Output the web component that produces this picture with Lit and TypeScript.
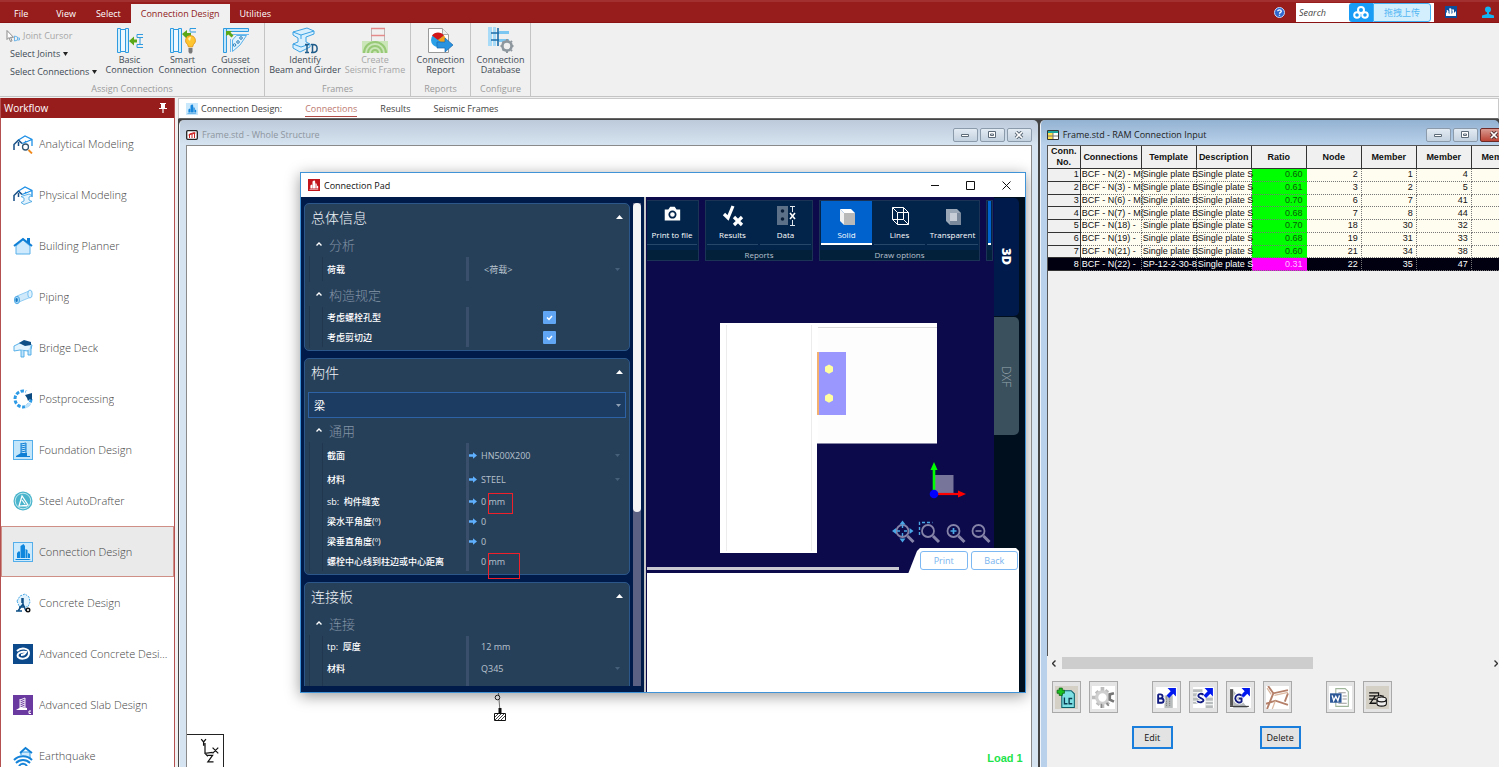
import { LitElement, html, svg, css, nothing } from "lit";
import { customElement, state } from "lit/decorators.js";
import { classMap } from "lit/directives/class-map.js";

const base = css`
  * { box-sizing: border-box; }
  :host { font-family: "Open Sans", "Noto Sans", "Noto Sans CJK SC", sans-serif; font-size: 9px; color: #444; }
  button { font: inherit; color: inherit; background: none; border: 0; padding: 0; margin: 0; }
  input, select { font: inherit; color: inherit; }
  svg { display: block; flex: none; }
`;

/* ---------- icons ---------- */

const towers = (c: string) => svg`
  <path fill=${c} d="M4 16V11l2-2 1 1v6zM7.500 16V4l3-2 1.500 2v12zM12.500 16V7l2 1v8zM15 16v-5l2 1v4z"/><path fill=${c} d="M2 17h16l-2 1H3z"/>`;

const houseFrame = svg`
  <path fill="none" stroke="#174f86" stroke-width="1.500" d="M1 16v-5.500L5.500 6 9 9.500M5.500 8v4"/>
  <path fill="none" stroke="#1e90e6" stroke-width="1.300" d="M5.500 6L12 2l7 3.500V12M9 9.500l4-1.500 6-2.500M13 8l-1-1"/>`;

const flowIcons: Record<string, unknown> = {
  analytical: svg`${houseFrame}<circle cx="12.500" cy="13" r="3" fill="#fff" stroke="#33556f" stroke-width="1.300"/><path stroke="#f08a1c" stroke-width="1.800" d="M15.500 16l3.500 3.500"/>`,
  physical: svg`${houseFrame}<path fill="#e3f3fd" stroke="#3aa0e0" stroke-width=".8" d="M8 11.500l8-2.500 3 1.500-3 1.500v3l3 1.500-8 3-3-2 3-1.500v-3z"/>`,
  house: svg`<path fill="#cfeafc" stroke="#58b0ea" d="M3 10l7-6 7 6v8H3z"/><path fill="none" stroke="#0f7fd6" stroke-width="2" d="M1 10l9-7 9 7"/><path fill="#0f7fd6" d="M14 2h3v6l-3-2z"/>`,
  pipe: svg`<path fill="#cfe9fb" stroke="#7cc3f0" stroke-width=".8" d="M4 9l12-5 2 6L6 15z"/><ellipse cx="4" cy="13" rx="2.600" ry="3.800" fill="#9dd4f7" stroke="#3b9fe2" stroke-width=".8"/><ellipse cx="3.600" cy="13" rx="1.200" ry="2" fill="#1878c0"/><ellipse cx="17" cy="7" rx="2.200" ry="4" fill="#dff2fd" stroke="#62b5ec" stroke-width=".8"/>`,
  bridge: svg`<path fill="#e4f4fe" stroke="#4aa9e6" stroke-width=".9" d="M1 8l6-3 12 2-1 4-3 2-8-1-6 1z"/><path fill="#0f4f86" d="M6 5l5-3 7 2v3l-6 1z"/><path fill="#bfe3fa" stroke="#4aa9e6" stroke-width=".9" d="M8 12v7h3v-6M15 12v5h3V8"/>`,
  post: svg`<g fill="none" stroke-width="3"><circle cx="10" cy="10" r="8" stroke="#2d9ae6" stroke-dasharray="3.400 1.600"/><path stroke="#fff" stroke-width="4" d="M13 2.500A8 8 0 0118 9.500"/></g><path fill="#0c4b82" d="M12 6l7-2v7l-2-1-2 2-1-3z"/><path stroke="#bfe3fa" stroke-width="3" fill="none" d="M17 14a8 8 0 01-5 4"/>`,
  foundation: svg`<rect x=".5" y=".5" width="19" height="19" fill="#c4e6fb" stroke="#54aeea"/><path stroke="#0f7fd6" fill="none" d="M8 4l5-1M8 6l5-1M8 8l5-1M8 10l5-1M8 12l5-1M8 3v11M13 3v11"/><path fill="#0f7fd6" d="M3 16l5-3h6v3h3v1H3z"/>`,
  drafter: svg`<circle cx="10" cy="10" r="9.500" fill="#49b4cb"/><circle cx="10" cy="10" r="7.800" fill="none" stroke="#bfe8f0"/><path fill="none" stroke="#fff" stroke-width="1.200" d="M6 15L9 5l6 9zM9 9l3 4M6 15h8"/>`,
  connection: svg`<rect x=".5" y=".5" width="19" height="19" fill="#cdeafc" stroke="#54aeea"/>${towers("#0f86de")}`,
  concrete: svg`<path fill="#e2f3fd" stroke="#4aa9e6" stroke-dasharray="2 1" d="M4 8l3-5 5-2 4 3 1 5-2 5-9-1z"/><path fill="none" stroke="#0d4f86" stroke-width="1.500" d="M10 5v6L5 18M10 11l3 7M9 5v5M6 14h6M3 18h6"/><circle cx="15" cy="17" r="1.800" fill="none" stroke="#111" stroke-width="1.400"/>`,
  advConcrete: svg`<rect width="20" height="20" fill="#0d4a8c"/><path fill="none" stroke="#fff" stroke-width="2" d="M4 7c4-4 12-3 12 2 0 6-8 7-11 4-2-4 4-6 8-5-1 2-3 3-5 3"/>`,
  slab: svg`<rect width="20" height="20" fill="#6b3aa0"/><path stroke="#fff" fill="none" stroke-width=".9" d="M7 5l5-2M7 7l5-2M7 9l5-2M7 11l5-2M7 13l5-2M7 4v9M12 3v10"/><path fill="#fff" d="M3 15l5-3 6 1v2z"/><path fill="none" stroke="#fff" d="M18 16h-2v2.500h2"/>`,
  quake: svg`<path fill="#cfeafc" stroke="#2d9ae6" d="M8 9V6h9v7"/><path fill="none" stroke="#0f7fd6" stroke-width="1.800" d="M7 7l5.500-5L19 7"/><g fill="none" stroke="#1583d8" stroke-width="2"><path d="M1 14c5-5 13-5 18 0M3 17c4-4 10-4 14 0M6 20c2-3 6-3 8 0"/></g>`,
};

const column = svg`<path fill="#d6effd" stroke="#2e9be0" d="M1.500 1.500h3v24h-3zM9.500 1.500h3v24h-3z"/><path fill="#eef8fe" stroke="#2e9be0" d="M4.500 2.500h5v22h-5z"/>`;

const ribbonIcons: Record<string, unknown> = {
  basic: svg`${column}<path fill="#5aa81a" d="M13 14l5-4.500v3h3v3h-3v3z"/><path fill="none" stroke="#2e9be0" d="M27 7.500h-6v3h3v7h-3v3h6M27 10.500h-3M27 17.500h-3"/>`,
  smart: svg`${column}<path fill="none" stroke="#2e9be0" d="M27 1.500h-6v3M21 5h6"/><path fill="#5aa81a" d="M13 7l5-4v3h4v3h-4v3z"/><path fill="#ffc531" stroke="#d98a10" stroke-width=".7" d="M21.500 8.500a5 5 0 00-3 9l1 2.500h4l1-2.500a5 5 0 00-3-9z"/><path fill="#777" d="M19.500 21h4v4l-1 1.500h-2l-1-1.500z"/><path fill="#fff3b0" d="M19 12a3 3 0 013-2l-1 4z"/>`,
  gusset: svg`<path fill="#bfe5fb" stroke="#2e9be0" d="M1.500 1.500h3v24h-3zM4.500 1.500h22v3h-22z"/><path fill="none" stroke="#6fbdf0" d="M8.500 25V12M10 7.500h17"/><path fill="#dff2fd" stroke="#5ab1ea" d="M10.500 24.500V13l4-4.500h10L18 18z"/><circle cx="19" cy="11" r="1.300" fill="none" stroke="#2e7fb8"/><circle cx="16" cy="15" r="1.300" fill="none" stroke="#2e7fb8"/><circle cx="12.500" cy="18" r="1.300" fill="none" stroke="#2e7fb8"/><path fill="#5aa81a" d="M4 4h6L8.500 5.500l3 3-2 2-3-3L4 9z"/>`,
  identify: svg`<path fill="#d8effd" stroke="#3ba2e4" d="M2 5L16 1l7 3v3l-8 3v5l4 2v3L9 25l-7-4v-4l5-2V11L2 8z"/><path fill="none" stroke="#3ba2e4" d="M2 5l8 3 13-4M10 8v4M2 17l8 3 9-3"/><path stroke="#205c8a" stroke-width="1.500" fill="none" d="M14 17.500h4M16 17.500v8M14 25.500h4M20 17.500h2c5.500 0 5.500 8 0 8h-2M21.500 17.500v8"/>`,
  seismic: svg`<path fill="none" stroke="#bdb6b6" d="M10.500 2v14M23.500 2v14"/><path stroke="#e58a8a" stroke-width="1.400" d="M10 1.500h14M10 8.500h14"/><path fill="#cbe6b8" d="M1 14h26v12H1z"/><g fill="none" stroke="#97c977" stroke-width="2"><path d="M3 26a11 11 0 0122 0M7 26a7 7 0 0114 0M11 26a3 3 0 016 0"/></g>`,
  report: svg`<path fill="#fff" stroke="#9a9a9a" d="M1.500 1.500h14l6 6v18h-20z"/><path fill="#eee" stroke="#aaa" d="M15.500 1.500v6h6"/><circle cx="11" cy="13" r="7" fill="#29a0e8"/><path fill="#d11919" d="M11 13L5 8.500a7.500 7.500 0 0112 0z"/><path fill="#f2a11c" d="M11 13l6-4.500a7 7 0 010 9z"/><path fill="#2a93e0" stroke="#1668ae" stroke-width=".7" d="M10 15h8v-4l8 7-8 7v-4h-8z"/>`,
  database: svg`<path fill="#a8dbf8" d="M1 0h4v19H1zM6 0h3v19H6z"/><path stroke="#1b6ca8" stroke-width="1.600" fill="none" d="M11 1v18M4 6h9M4 13h9"/><path fill="#7cc6f2" d="M12 4h10v3H12zM12 12h10v3H12z"/><circle cx="20" cy="19" r="4.600" fill="#f0f0f0" stroke="#8e979e" stroke-width="2.600"/><g stroke="#8e979e" stroke-width="2"><path d="M20 12v2M20 24v2M13.500 19h2M24.500 19h2M15.500 14.500l1 1M24 15l1-1M15.500 23.500l1-1M24 23l1 1"/></g>`,
};

/* ---------- workflow sidebar ---------- */

@customElement("workflow-panel")
class WorkflowPanel extends LitElement {
  @state() selected = "Connection Design";
  static styles = [base, css`
    :host { display: flex; flex-direction: column; min-height: 0; overflow: hidden; border: 1px solid #b4504f; border-bottom: 0; border-top: 0; background: #fff; }
    .head { display: flex; align-items: center; justify-content: space-between; height: 20px; flex: none; padding: 0 6px 0 3px; background: #971c1c; color: #fff; font-size: 10px; }
    .item { display: flex; align-items: center; gap: 6px; width: 100%; height: 51px; flex: none; padding: 0 4px 0 11px; font-size: 11px; font-weight: 300; text-align: left; border: 1px solid transparent; }
    .item span { overflow: hidden; text-overflow: ellipsis; white-space: nowrap; }
    .on { background: #eaeaea; border-color: #cf8e86; }
  `];
  render() {
    const items = [["analytical", "Analytical Modeling"], ["physical", "Physical Modeling"], ["house", "Building Planner"], ["pipe", "Piping"], ["bridge", "Bridge Deck"], ["post", "Postprocessing"], ["foundation", "Foundation Design"], ["drafter", "Steel AutoDrafter"], ["connection", "Connection Design"], ["concrete", "Concrete Design"], ["advConcrete", "Advanced Concrete Design"], ["slab", "Advanced Slab Design"], ["quake", "Earthquake"]];
    return html`
      <div class="head">Workflow
        <svg width="10" height="12" viewBox="0 0 10 12"><path fill="#fff" d="M2 1h6v1H7v4h2v1H5.600v4H4.400V7H1V6h2V2H2z"/></svg>
      </div>
      ${items.map(([icon, name]) => html`
        <button class="item ${classMap({ on: name === this.selected })}" @click=${() => (this.selected = name)}>
          <svg width="20" height="20" viewBox="0 0 20 20">${flowIcons[icon]}</svg><span>${name}</span>
        </button>`)}`;
  }
}

/* ---------- connection pad dialog ---------- */

type Row = { label: string; value?: string; kind: "select" | "text" | "check"; arrow?: boolean; mark?: string };

@customElement("connection-pad")
class ConnectionPad extends LitElement {
  static styles = [base, css`
    :host { display: flex; flex-direction: column; background: #fff; border: 1px solid #3f93d6; box-shadow: 0 3px 14px rgba(0, 0, 0, .4); }
    .title { display: flex; align-items: center; height: 24px; flex: none; padding-left: 7px; color: #111; font-size: 9px; }
    .title .name { flex: 1; padding-left: 4px; }
    .title button { width: 36px; height: 24px; display: grid; place-items: center; }
    .body { flex: 1; display: grid; grid-template-columns: 343px 3px 1fr; min-height: 0; background: #000f1e; }
    .left { display: flex; gap: 3px; padding: 6px 3px 6px 3px; background: #001a4a; min-height: 0; }
    .cards { flex: 1; display: flex; flex-direction: column; gap: 7px; overflow: hidden; }
    .split { background: #c6c6c6; border-right: 1px solid #0c0a4b; }
    .track { width: 8px; background: #5a6182; }
    .thumb { height: 64%; background: #f4f4f6; border-radius: 4px; }
    .card { flex: none; border: 1px solid #2b578a; border-radius: 5px; background: #27405a; padding-bottom: 2px; }
    .ctitle { display: flex; justify-content: space-between; align-items: center; width: 100%; height: 25px; padding: 0 6px; color: #f1f4f7; font-size: 14px; font-weight: 300; }
    .sect { display: flex; align-items: center; gap: 7px; width: 100%; height: 24px; padding-left: 11px; color: #8495a6; font-size: 13px; font-weight: 300; }
    .ctitle + .sect { margin-top: 3px; }
    .combo { display: flex; align-items: center; margin: 8px 3px 0; height: 26px; border: 1px solid #2d62a6; background: #1d3c62; padding: 0 4px 0 5px; color: #fff; }
    .combo select { flex: 1; font-size: 11px; }
    select { appearance: none; border: 0; background: none; padding: 0; outline: 0; min-width: 0; }
    .rows { margin-left: 4px; border-left: 1px solid #21374f; padding: 1px 0; }
    .row { display: grid; grid-template-columns: 143px 3px 1fr; height: 20px; margin-left: 12px; border-left: 1px solid #21374f; align-items: center; color: #fff; }
    .row.tall { height: 24px; }
    .row .name { padding-left: 4px; font-weight: 500; white-space: pre; }
    .bar { align-self: stretch; background: #3a4f6b; }
    .val { position: relative; display: flex; align-items: center; color: #b7c2cd; padding: 0 9px 0 0; gap: 3px; }
    .val .mk { width: 9px; }
    .val input[type="text"], .val select { flex: 1; min-width: 0; width: 40px; border: 0; background: none; padding: 0; outline: 0; font-size: 9px; }
    .val.wide { padding-left: 3px; }
    .check { justify-content: center; padding: 0; }
    .check input { appearance: none; margin: 0; width: 13px; height: 13px; border-radius: 1px; background: #60a6f4 center / 9px 9px no-repeat url("data:image/svg+xml,%3Csvg xmlns='http://www.w3.org/2000/svg' viewBox='0 0 9 9'%3E%3Cpath d='M2 4.5l2 2 3-3.500' fill='none' stroke='white' stroke-width='1.500'/%3E%3C/svg%3E"); }
    .mark { position: absolute; left: 19px; top: -2px; width: 25px; height: 21px; border: 1px solid #f0202a; pointer-events: none; }
    .mark.big { width: 32px; height: 26px; z-index: 1; }

    .right { display: grid; grid-template-columns: 347px 25px; grid-template-rows: 376px 1fr; position: relative; min-height: 0; }
    .view { background: #0c0a4b; display: flex; flex-direction: column; overflow: hidden; }
    .tools { display: flex; gap: 6px; padding-top: 3px; flex: none; color: #fff; font-size: 8px; white-space: nowrap; }
    .grp { border: 1px solid #1b3354; background: #02244a; flex: none; }
    .grp.cut { border-left: 0; }
    .btns { display: flex; gap: 2px; padding: 0 1px; height: 49px; }
    .cut .btns { padding-left: 0; }
    .btns button { width: 51px; height: 44px; display: flex; flex-direction: column; align-items: center; justify-content: space-between; padding: 4px 0 4px; line-height: 10px; border-bottom: 1px solid #26466a; font-weight: 500; }
    .cut .btns button { width: 50px; }
    .btns button.on { background: #0063cd; border-bottom: 2px solid #fff; padding-bottom: 3px; }
    .btns .sliver { width: 3px; }
    .cap { height: 10px; line-height: 10px; text-align: center; background: #03203a; color: #b9c3cf; }
    .scene { flex: 1; width: 100%; min-height: 0; }
    .tabs { display: flex; flex-direction: column; gap: 1px; padding-top: 1px; }
    .tabs button { height: 118px; writing-mode: vertical-rl; border-radius: 0 5px 5px 0; background: #001a4b; color: #fff; font-size: 13px; font-weight: 800; text-align: center; }
    .tabs button.off { background: #3a505d; color: #9aa8b0; font-weight: 300; font-size: 12px; }
    .under { grid-column: 1 / 3; background: #fff; }
    .foot { position: absolute; left: 261px; top: 351px; width: 111px; height: 26px; padding: 3px 1px 3px 12px; display: flex; gap: 3px; background: #fff; clip-path: polygon(0 100%, 9px 3px, 12px 0, 108px 0, 100% 3px, 100% 100%); }
    .foot button { flex: 1; border: 1px solid #7db8f2; border-radius: 3px; background: #fff; color: #79b4ef; height: 19px; font-size: 9px; }
  `];

  rows(rows: Row[], wide = false) {
    return html`<div class="rows">${rows.map((r) => html`
      <label class="row ${classMap({ tall: r.kind === "select" })}">
        <span class="name">${r.label}</span><span class="bar"></span>
        <span class="val ${classMap({ check: r.kind === "check", wide })}">
          ${r.kind === "check" ? html`<input type="checkbox" checked />` : html`
            <svg class="mk" width="9" height="7" viewBox="0 0 9 7">${r.arrow ? svg`<path fill="#5fb0ff" d="M0 2.300h4V.3l4 3.200-4 3.200v-2H0z"/>` : nothing}</svg>
            ${r.kind === "select"
              ? html`<select><option>${r.value}</option></select><svg width="5" height="3" viewBox="0 0 5 3"><path fill="#46607a" d="M0 0h5L2.500 3z"/></svg>`
              : html`<input type="text" .value=${r.value ?? ""} />`}`}
          ${r.mark ? html`<i class="mark ${r.mark}"></i>` : nothing}
        </span>
      </label>`)}</div>`;
  }
  head(t: string) {
    return html`<button class="ctitle">${t}<svg width="7" height="4" viewBox="0 0 7 4"><path fill="#fff" d="M0 4h7L3.500 0z"/></svg></button>`;
  }
  sect(t: string) {
    return html`<button class="sect"><svg width="6" height="4" viewBox="0 0 6 4"><path fill="none" stroke="#fff" stroke-width="1.400" d="M.5 3.500L3 1l2.500 2.500"/></svg>${t}</button>`;
  }
  render() {
    return html`
      <div class="title">
        <svg width="12" height="12" viewBox="0 0 20 20"><rect width="20" height="20" fill="#c2161c"/>${towers("#fff")}</svg>
        <span class="name">Connection Pad</span>
        <button aria-label="Minimize"><svg width="8" height="8" viewBox="0 0 8 8"><path stroke="#111" d="M0 4.500h8"/></svg></button>
        <button aria-label="Maximize"><svg width="9" height="9" viewBox="0 0 9 9"><path fill="none" stroke="#111" d="M.5.5h8v8h-8z"/></svg></button>
        <button aria-label="Close"><svg width="9" height="9" viewBox="0 0 9 9"><path stroke="#111" d="M.5.5l8 8M8.500.5l-8 8"/></svg></button>
      </div>
      <div class="body">
        <div class="left">
          <div class="cards">
            <section class="card">
              ${this.head("总体信息")}${this.sect("分析")}
              ${this.rows([{ label: "荷载", value: "<荷载>", kind: "select" }], true)}
              ${this.sect("构造规定")}
              ${this.rows([{ label: "考虑螺栓孔型", kind: "check" }, { label: "考虑剪切边", kind: "check" }])}
            </section>
            <section class="card">
              ${this.head("构件")}
              <label class="combo"><select aria-label="构件"><option>梁</option></select><svg width="5" height="3" viewBox="0 0 5 3"><path fill="#8fa2b5" d="M0 0h5L2.500 3z"/></svg></label>
              ${this.sect("通用")}
              ${this.rows([
                { label: "截面", value: "HN500X200", kind: "select", arrow: true },
                { label: "材料", value: "STEEL", kind: "select", arrow: true },
                { label: "sb:  构件缝宽", value: "0 mm", kind: "text", arrow: true, mark: "small" },
                { label: "梁水平角度(º)", value: "0", kind: "text", arrow: true },
                { label: "梁垂直角度(º)", value: "0", kind: "text", arrow: true },
                { label: "螺栓中心线到柱边或中心距离", value: "0 mm", kind: "text", mark: "big" },
              ])}
            </section>
            <section class="card">
              ${this.head("连接板")}${this.sect("连接")}
              ${this.rows([
                { label: "tp:  厚度", value: "12 mm", kind: "text" },
                { label: "材料", value: "Q345", kind: "select" },
                { label: "", value: "", kind: "text" },
              ])}
            </section>
          </div>
          <div class="track"><div class="thumb"></div></div>
        </div>
        <div class="split"></div>
        <div class="right">
          <div class="view">
            <div class="tools">
              <div class="grp cut">
                <div class="btns"><button>
                  <svg width="22" height="20" viewBox="0 0 22 22"><path fill="#fff" d="M3 5h4l2-3h5l2 3h4v12H3z"/><circle cx="11.500" cy="10.500" r="3.500" fill="none" stroke="#02244a" stroke-width="1.900"/></svg>Print to file</button></div>
                <div class="cap"></div>
              </div>
              <div class="grp">
                <div class="btns">
                  <button><svg width="22" height="22" viewBox="0 0 22 22"><path fill="none" stroke="#fff" stroke-width="3.200" d="M2 9l4 4L11 1M12 12l8 8M20 12l-8 8"/></svg>Results</button>
                  <button><svg width="22" height="22" viewBox="0 0 22 22"><path fill="#5c7187" d="M2 1h11v19H2z"/><circle cx="7.500" cy="6" r="1.800" fill="#0a1d38"/><circle cx="7.500" cy="14" r="1.800" fill="#0a1d38"/><path stroke="#dfe6ec" fill="none" d="M15 1.500h5M17.500 2v5M15 20.500h5M17.500 15v5"/><path stroke="#fff" stroke-width="1.600" d="M15 8l5 6M20 8l-5 6"/></svg>Data</button>
                </div>
                <div class="cap">Reports</div>
              </div>
              <div class="grp">
                <div class="btns">
                  <button class="on"><svg width="22" height="22" viewBox="0 0 22 22"><path fill="#fff" d="M4 4h11l4 4H8z"/><path fill="#f2f2f2" d="M4 4l4 4v12l-4-4z"/><path fill="#b9b9b9" d="M8 8h11v12H8z"/></svg>Solid</button>
                  <button><svg width="22" height="22" viewBox="0 0 22 22"><path fill="none" stroke="#fff" d="M3.500 2.500h11v12h-11zM8.500 7.500h11v12h-11zM3.500 2.500l5 5M14.500 2.500l5 5M3.500 14.500l5 5M14.500 14.500l5 5"/></svg>Lines</button>
                  <button><svg width="22" height="22" viewBox="0 0 22 22"><path fill="#9aa7b6" d="M4 4h11l4 4v12H8l-4-4z"/><path fill="#7a8a9c" d="M8 8h11v12H8z"/><path fill="#c6cdd6" d="M8 8h7v8H8z"/></svg>Transparent</button>
                </div>
                <div class="cap">Draw options</div>
              </div>
              <div class="grp"><div class="btns"><button class="on sliver" aria-label="More"></button></div><div class="cap"></div></div>
            </div>
            <svg class="scene" viewBox="647 261 347 312" preserveAspectRatio="xMidYMid meet">
              <path fill="#fff" d="M720 323h217v120.500H817V553h-97z"/><path fill="#fdfdfd" d="M818 329h119v113H818z"/>
              <path stroke="#ececec" d="M726.500 325v226M811.500 325v226"/><path stroke="#d9d9d9" d="M818 327.500h119"/>
              <path fill="#9a98ff" d="M818 352h28v63h-28z"/><path fill="#f4b06e" d="M817 352h2v63h-2z"/>
              <path fill="#ffffa0" d="M829 364.500l4 2.300v4.600l-4 2.300-4-2.300v-4.600zM829 393.500l4 2.300v4.600l-4 2.300-4-2.300v-4.600z"/>
              <path fill="#77759a" d="M935 475h18.500v18.500H935z"/>
              <path stroke="#0f0" stroke-width="2.600" d="M934 494v-26"/><path fill="#0f0" d="M930.500 470l3.500-8 3.500 8z"/>
              <path stroke="#f00" stroke-width="2.200" d="M936 494h22"/><path fill="#f00" d="M958 490.500l8 3.500-8 3.500z"/><circle cx="934" cy="494" r="4.300" fill="#00f"/>
              <g fill="none" stroke="#8583a8" stroke-width="1.800">
                <circle cx="902.500" cy="531" r="6"/><circle cx="928" cy="531" r="6"/><circle cx="953.500" cy="531" r="6"/><circle cx="978.500" cy="531" r="6"/>
                <path stroke-width="3" d="M907.500 536l6 6M933 536l6 6M958.500 536l6 6M983.500 536l6 6"/>
                <path stroke-width="1.600" d="M975.500 531h6"/>
              </g>
              <path fill="#4aa6e4" d="M902.500 520.500l3 4h-6zM902.500 542.500l3-4h-6zM892 531l4-3v6zM913.500 531l-4-3v6z"/>
              <path stroke="#4aa6e4" stroke-width="1.400" stroke-dasharray="3 2" fill="none" d="M902.500 525v4M902.500 533v4M897 531h4M904 531h5M919.500 535v-12.500h13"/>
              <path stroke="#4aa6e4" stroke-width="1.700" d="M950.500 531h6M953.500 528v6"/>
              <path stroke="#c9c9d2" stroke-width="3" d="M647 568.500h252"/>
            </svg>
          </div>
          <div class="tabs"><button>3D</button><button class="off">DXF</button></div>
          <div class="under"></div>
          <div class="foot"><button>Print</button><button>Back</button></div>
        </div>
      </div>`;
  }
}

/* ---------- RAM connection table window ---------- */

@customElement("ram-input")
class RamInput extends LitElement {
  static styles = [base, css`
    :host { display: flex; flex-direction: column; min-width: 0; overflow: hidden; background: #f0f0f0; color: #111; }
    .wrap { flex: 1; overflow: hidden; border-top: 1px solid #555; border-left: 1px solid #555; min-height: 0; }
    table { border-collapse: separate; border-spacing: 0; table-layout: fixed; width: 479px; height: 125px; font-family: "Liberation Sans", Arial, sans-serif; font-size: 9px; line-height: 11px; }
    th { background: #f0f0f0; border-right: 1px solid #333; border-bottom: 1px solid #333; padding: 0; height: 23px; font-size: 9px; white-space: nowrap; }
    td { padding: 0 3px 0 1px; height: 12px; text-align: right; white-space: nowrap; border-right: 1px dotted #777; border-bottom: 1px dotted #777; background: #fffcf0; }
    td:first-child { background: #f0f0f0; border-right: 1px solid #333; border-bottom: 1px solid #333; padding-right: 1px; }
    td.t { text-align: left; padding-right: 0; }
    td.ratio { background: #0f0; color: #0b5a0b; border-right-color: #0f0; }
    .sel td, .sel td:first-child { background: #000010; color: #fff; }
    .sel td.ratio { background: #f0f; color: #ffc4ff; border-right-color: #f0f; }
    .c1 { width: 33px; } .c2 { width: 61px; } .c3 { width: 55px; }
    .scroll { display: flex; align-items: center; justify-content: space-between; height: 14px; flex: none; padding: 0 1px 0 5px; }
    .scroll i { flex: 1; height: 12px; margin: 0 6px; display: flex; }
    .scroll i::before { content: ""; width: 59%; background: #cdcdcd; }
    .tools { display: flex; gap: 8px; padding: 11px 0 13px 5px; flex: none; }
    .tools button { width: 29px; height: 32px; border: 1px solid #a9a9a9; background: #e4e4e4; display: grid; place-items: center; }
    .tools button.gap { margin-left: 26px; }
    .foot { display: flex; gap: 87px; padding-left: 85px; height: 41px; flex: none; }
    .foot button { width: 41px; height: 23px; border: 2px solid #1a7fdc; background: #e3e3e3; font-size: 9px; color: #111; }
  `];
  render() {
    const rows = [
      ["1", "BCF - N(2) - M(", "Single plate B", "Single plate S", "0.60", "2", "1", "4"],
      ["2", "BCF - N(3) - M(", "Single plate B", "Single plate S", "0.61", "3", "2", "5"],
      ["3", "BCF - N(6) - M(", "Single plate B", "Single plate S", "0.70", "6", "7", "41"],
      ["4", "BCF - N(7) - M(", "Single plate B", "Single plate S", "0.68", "7", "8", "44"],
      ["5", "BCF - N(18) -", "Single plate B", "Single plate S", "0.70", "18", "30", "32"],
      ["6", "BCF - N(19) -", "Single plate B", "Single plate S", "0.68", "19", "31", "33"],
      ["7", "BCF - N(21) -", "Single plate B", "Single plate S", "0.60", "21", "34", "38"],
      ["8", "BCF - N(22) -", "SP-12-2-30-8", "Single plate S", "0.31", "22", "35", "47"],
    ];
    const letter = (back: unknown, d: string) => svg`<path fill="#fff" d="M1 1h20v20H1z"/>${back}<path fill="#0018f0" d="M12 2h8v8l-2.500-2.500-4 4-2.500-2.500 4-4z"/><path fill="none" stroke="#fff" stroke-width="3.600" d=${d}/><path fill="none" stroke="#101a80" stroke-width="1.800" d=${d}/>`;
    const icons: [string, unknown, boolean][] = [
      ["Load case", svg`<path fill="#d5d0c6" d="M0 0h22v22H0z"/><path fill="#7fe0e4" stroke="#0b5f6b" d="M6.500 4.500h9l3 3v13h-12z"/><path fill="#19c01e" stroke="#0a5c10" stroke-width=".7" d="M4 2h3v2h2v3H7v2H4V7H2V4h2z"/><path fill="none" stroke="#0b3d52" stroke-width="1.300" d="M9 11v6h3M16.500 12h-3v5h3"/>`, false],
      ["Settings", svg`<path fill="#fff" d="M0 0h22v22H0z"/><path stroke="#bdbdbd" stroke-width="3.500" d="M4 5l12 13M15 4L5 18M10 1v20M0 11h10"/><circle cx="10" cy="11" r="5.500" fill="#fff" stroke="#cfcfcf" stroke-width="3"/><path fill="none" stroke="#777" stroke-width="2.500" d="M21 7l-4 1v5l4 2"/><path stroke="#888" stroke-width="1.500" d="M9 17v4M14 16l2 3"/>`, false],
      ["Basic", letter(svg`<path fill="#b9bcbc" d="M9 9h8v12H9z"/><path stroke="#777" stroke-dasharray="1 1" d="M11 10v10M14 10v10"/>`, "M3 8v8h3c3 0 3-4 0-4H3M3 8h2c3 0 3 4 0 4"), true],
      ["Smart", letter(svg`<path fill="#b9bcbc" d="M1 3h9v14H1zM13 10h7v11h-7z"/><path stroke="#fff" d="M1 6.500h19M1 10.500h19M1 14.500h19M13 18h7"/>`, "M11 8.500c-2-2-5-1-5 1s5 2 5 4-4 3-6 1"), false],
      ["Gusset", letter(svg`<path fill="#555" d="M1 3h3v16H1z"/><path fill="#b9bcbc" d="M4 4l14 17H4z"/><path stroke="#333" d="M1 19.500h18"/>`, "M12 9c-3-2-6 0-6 3s4 5 6 3v-3H9.500"), false],
      ["Frame view", svg`<path fill="#fff" d="M0 0h22v22H0z"/><path fill="none" stroke="#b5806a" stroke-width="1.800" d="M2 0l5 7 14-3M0 17l9-3 12 4M7 7l-6 15M18 15l3-8"/><path stroke="#dcb9a2" stroke-width="1.200" fill="none" d="M8 9l13-3M9 14l-3 8M1 2l4 6"/>`, false],
      ["Word report", svg`<path fill="#fff" d="M0 0h22v22H0z"/><path fill="#fff" stroke="#9fb59a" d="M6.500 2.500h9l3 3v14h-12z"/><path stroke="#9a9a9a" d="M9 6.500h7M13 9.500h4M13 12.500h4M9 16.500h8"/><path fill="#2b5797" d="M1 7h11v9H1z"/><path fill="none" stroke="#fff" stroke-width="1.300" d="M3 9l1.500 5L6.500 10l2 4L10 9"/>`, true],
      ["Database", svg`<path fill="#d5d0c6" d="M0 0h22v22H0z"/><path fill="none" stroke="#111" stroke-width="1.200" d="M3 6.500h9v3H3M3 12.500h7M9 9.500l-5 7h6M13 9l4 1"/><ellipse cx="15" cy="13" rx="4.500" ry="2.400" fill="#eee" stroke="#111"/><path fill="#eee" stroke="#111" d="M10.500 13v4c0 3 9 3 9 0v-4c0 3-9 3-9 0z"/>`, false],
    ];
    return html`
      <div class="wrap">
        <table>
          <colgroup><col class="c1" /><col class="c2" />${[1, 2, 3, 4, 5, 6, 7].map(() => html`<col class="c3" />`)}</colgroup>
          <thead><tr><th>Conn.<br />No.</th><th>Connections</th><th>Template</th><th>Description</th><th>Ratio</th><th>Node</th><th>Member</th><th>Member</th><th>Member</th></tr></thead>
          <tbody>${rows.map((r) => html`<tr class=${classMap({ sel: r[0] === "8" })}>${r.map((c, i) => html`<td class=${classMap({ t: i > 0 && i < 4, ratio: i === 4 })}>${c}</td>`)}<td></td></tr>`)}</tbody>
        </table>
      </div>
      <div class="scroll">
        <svg width="4" height="7" viewBox="0 0 4 7"><path fill="none" stroke="#333" stroke-width="1.400" d="M3.500.5l-3 3 3 3"/></svg><i></i>
        <svg width="4" height="7" viewBox="0 0 4 7"><path fill="none" stroke="#333" stroke-width="1.400" d="M.5.5l3 3-3 3"/></svg>
      </div>
      <div class="tools">${icons.map(([name, icon, gap]) => html`<button class=${classMap({ gap })} aria-label=${name}><svg width="23" height="23" viewBox="0 0 22 22">${icon}</svg></button>`)}</div>
      <div class="foot"><button>Edit</button><button>Delete</button></div>`;
  }
}

/* ---------- shell ---------- */

@customElement("app-root")
class AppRoot extends LitElement {
  static styles = [base, css`
    :host { display: flex; flex-direction: column; height: 100vh; overflow: hidden; background: #f0f0f0; }
    .top { display: flex; align-items: stretch; height: 23px; flex: none; background: #971c1c; border-top: 2px solid #a33030; border-bottom: 1px solid #8a1212; color: #fff; font-size: 9px; }
    .menu { display: flex; padding: 2px 0 0 4px; }
    .menu button { padding: 0 10px; }
    .menu button:first-child { padding-right: 18px; }
    .menu button.on { background: #f0f0f0; color: #8f2020; margin-bottom: -1px; }
    .right { margin-left: auto; display: flex; align-items: center; padding-right: 5px; }
    .search { display: flex; width: 138px; height: 19px; margin: 0 11px; background: #fff; }
    .search input { width: 53px; border: 0; padding: 0 3px; outline: 0; font-style: italic; font-size: 9px; background: none; color: #444; }
    .cloud { width: 24px; background: #189cf5; display: grid; place-items: center; border-radius: 3px 0 0 3px; }
    .drop { width: 58px; background: #d3effe; border: 1px solid #41b1f4; color: #55b7f2; font-size: 9px; border-radius: 0 3px 3px 0; }
    .people { margin-right: 25px; }

    .ribbon { display: flex; height: 74px; flex: none; border-bottom: 1px solid #c4c4c4; background: #f0f0f0; font-size: 9px; line-height: 10px; color: #3f4a54; }
    .group { display: flex; flex-direction: column; border-right: 1px solid #c4c4c4; }
    .group .cap { text-align: center; color: #9a9a9a; padding-bottom: 2px; }
    .cmds { flex: 1; display: flex; justify-content: center; padding-top: 4px; }
    .g1 { width: 265px; } .g2 { width: 146px; } .g3 { width: 60px; }
    .g2 .cmds { padding-left: 5px; }
    .mini { display: flex; flex-direction: column; gap: 8px; width: 101px; padding: 4px 0 0 8px; align-items: flex-start; }
    .mini button { height: 10px; white-space: nowrap; display: flex; gap: 3px; align-items: center; }
    .mini .off { margin-left: -4px; }
    .off { color: #a6a6a6; }
    .big { width: 53px; display: flex; flex-direction: column; align-items: center; gap: 1px; height: 50px; white-space: nowrap; }
    .g2 .big { width: 70px; }

    .work { flex: 1; display: grid; grid-template-columns: 175px minmax(0, 1fr); gap: 3px; padding-top: 1px; min-height: 0; }
    .main { display: flex; flex-direction: column; min-height: 0; }
    .sub { display: flex; align-items: center; height: 21px; flex: none; background: #fff; border: 1px solid #c9c9c9; border-bottom: 1px solid #666; padding-left: 7px; font-size: 9px; color: #444; }
    .sub svg { margin-right: 3px; }
    .sub a { color: inherit; text-decoration: none; margin-left: 23px; line-height: 15px; border-bottom: 1px solid transparent; }
    .sub a.on { color: #bd7a70; border-color: #b04a44; }
    .mdi { flex: 1; display: grid; grid-template-columns: minmax(0, 858fr) minmax(0, 459fr); gap: 2px; background: #444; padding: 1px 0 0 1px; min-height: 0; }
    .win { display: flex; flex-direction: column; min-height: 0; padding: 0 6px; border-radius: 5px 5px 0 0; background: linear-gradient(#bccada, #d6e3f0 25px); border-left: 1px solid #eef4fa; }
    .win.active { background: linear-gradient(#93b2d2, #b9d1ea 25px); padding-right: 0; }
    .bar { display: flex; align-items: center; gap: 4px; height: 25px; flex: none; padding-top: 4px; font-size: 9px; color: #8d969f; }
    .active .bar { color: #222; }
    .bar span { flex: 1; }
    .bar button { width: 25px; height: 14px; border: 1px solid #8b9bab; border-radius: 2px; background: linear-gradient(#e3ebf3, #c3d1df); display: grid; place-items: center; margin-left: -2px; }
    .bar .x { width: 28px; background: linear-gradient(#d99a90, #bb4436); border-color: #6d2a26; margin-right: -9px; }
    .canvas { position: relative; flex: 1; background: #fff; border: 1px solid #8a8a8a; border-bottom: 0; min-height: 0; overflow: hidden; }
    .active ram-input { flex: 1; min-height: 0; }
    connection-pad { position: absolute; left: 113px; right: 5px; top: 26px; height: 521px; }
    .support { position: absolute; left: 305px; top: 547px; }
    .axes { position: absolute; left: -1px; bottom: 0; border: 1px solid #222; border-bottom: 0; }
    .load { position: absolute; right: 8px; bottom: 3px; color: #1ce44a; font: bold 11px "Liberation Sans", Arial, sans-serif; }
  `];
  big(icon: string, a: string, b: string, off = false) {
    return html`<button class="big ${classMap({ off })}"><svg width="28" height="27" viewBox="0 0 28 27">${ribbonIcons[icon]}</svg><span>${a}<br />${b}</span></button>`;
  }
  winButtons(active: boolean) {
    const c = "#5d6b79";
    return html`
      <button aria-label="Minimize"><svg width="10" height="8" viewBox="0 0 10 8"><path fill="#fff" stroke=${c} d="M1.500 3.500h7v2h-7z"/></svg></button>
      <button aria-label="Restore"><svg width="10" height="8" viewBox="0 0 10 8"><path fill="#fff" stroke=${c} d="M1.500.5h7v6h-7z"/><path stroke=${c} fill="none" d="M3.500 3h3v1.500h-3z"/></svg></button>
      <button class=${classMap({ x: active })} aria-label="Close"><svg width="10" height="8" viewBox="0 0 10 8"><path stroke=${active ? "#5a3a3a" : c} stroke-width="3.600" d="M2 1l6 6M8 1L2 7"/><path stroke="#fff" stroke-width="1.700" d="M2 1l6 6M8 1L2 7"/></svg></button>`;
  }
  render() {
    return html`
      <header class="top">
        <nav class="menu"><button>File</button><button>View</button><button>Select</button><button class="on">Connection Design</button><button>Utilities</button></nav>
        <div class="right">
          <svg width="11" height="11" viewBox="0 0 11 11"><circle cx="5.500" cy="5.500" r="5" fill="#2d66cf" stroke="#c9d8f5"/><path fill="none" stroke="#fff" stroke-width="1.300" d="M3.700 4.300c0-2 3.600-2 3.600 0 0 1.200-1.800 1-1.800 2.400M5.500 7.700v1"/></svg>
          <div class="search">
            <input type="text" value="Search" aria-label="Search" />
            <div class="cloud"><svg width="16" height="13" viewBox="0 0 16 13"><g fill="none" stroke="#fff" stroke-width="2"><circle cx="8" cy="4" r="3"/><circle cx="4" cy="9" r="2.800"/><circle cx="12" cy="9" r="2.800"/></g></svg></div>
            <button class="drop">拖拽上传</button>
          </div>
          <svg class="people" width="12" height="12" viewBox="0 0 12 12"><path fill="#0c4e9b" d="M0 0h12v12H0z"/><path fill="#fff" d="M1 10V7l1-1-.5-1.500L2.500 4l1 1v2l1 1V4L4 3l1-1 1.500 1v5l1-1V5L7 4l1-1 1 1v2l1 1v-2l1 1v4z"/></svg>
          <svg width="12" height="12" viewBox="0 0 12 12"><circle cx="6" cy="3.500" r="3" fill="#12b4f2"/><path fill="#12b4f2" d="M5 6h2v2l5 1.500V12H0V9.500L5 8z"/></svg>
        </div>
      </header>
      <div class="ribbon">
        <div class="group g1"><div class="cmds">
          <div class="mini">
            <button class="off"><svg width="14" height="12" viewBox="0 0 14 12"><path fill="#fff" stroke="#8a8a8a" d="M1 .5v9l2-2 1.500 4 1.500-.7-1.500-3.500h3z"/><path fill="none" stroke="#6fb7e8" d="M8.500 11V6l3 1v3zM11.500 8h2v2h-2"/></svg>Joint Cursor</button>
            <button>Select Joints <svg width="5" height="4" viewBox="0 0 5 4"><path fill="#222" d="M0 0h5L2.500 4z"/></svg></button>
            <button>Select Connections <svg width="5" height="4" viewBox="0 0 5 4"><path fill="#222" d="M0 0h5L2.500 4z"/></svg></button>
          </div>
          ${this.big("basic", "Basic", "Connection")}${this.big("smart", "Smart", "Connection")}${this.big("gusset", "Gusset", "Connection")}
        </div><div class="cap">Assign Connections</div></div>
        <div class="group g2"><div class="cmds">${this.big("identify", "Identify", "Beam and Girder")}${this.big("seismic", "Create", "Seismic Frame", true)}</div><div class="cap">Frames</div></div>
        <div class="group g3"><div class="cmds">${this.big("report", "Connection", "Report")}</div><div class="cap">Reports</div></div>
        <div class="group g3"><div class="cmds">${this.big("database", "Connection", "Database")}</div><div class="cap">Configure</div></div>
      </div>
      <div class="work">
        <workflow-panel></workflow-panel>
        <div class="main">
          <nav class="sub"><svg width="12" height="12" viewBox="0 0 20 20"><path fill="#c9e8fb" d="M0 0h20v20H0z"/>${towers("#1686dc")}</svg>Connection Design:
            <a href="#connections" class="on">Connections</a><a href="#results">Results</a><a href="#seismic">Seismic Frames</a></nav>
          <div class="mdi">
            <section class="win">
              <div class="bar"><svg width="12" height="10" viewBox="0 0 12 10"><rect x=".7" y=".7" width="10.600" height="8.600" rx="1" fill="#fff" stroke="#222" stroke-width="1.300"/><path stroke="#c22" fill="none" d="M3.500 8V4l5-1.500V8M6 3.500V8M2.500 5l7-2"/></svg><span>Frame.std - Whole Structure</span>${this.winButtons(false)}</div>
              <div class="canvas">
                <svg class="support" width="16" height="30" viewBox="0 0 16 30"><path stroke="#777" d="M6.500 0L8 19"/><circle cx="5.500" cy="4.500" r="2.300" fill="#fff" stroke="#222"/><path fill="#111" d="M6.500 15h3v6h-3z"/><path fill="#fff" stroke="#111" d="M2.500 20.500h11v7h-11z"/><path stroke="#111" stroke-width=".8" d="M3 24l3-3M3 27l6-6M6 27l6-6M9 27l4-4"/></svg>
                <svg class="axes" width="38" height="33" viewBox="0 0 38 33"><path fill="#fff" d="M0 0h38v33H0z"/><path fill="none" stroke="#111" stroke-width="1.300" d="M19 8v11l8-1M19 19l3 3M15 4l2.500 3L20 4M17.500 7v4M27 13l6 6M33 13l-6 6M21 21h6l-5 7h6"/></svg>
                <div class="load">Load 1</div>
                <connection-pad></connection-pad>
              </div>
            </section>
            <section class="win active">
              <div class="bar"><svg width="12" height="10" viewBox="0 0 12 10"><path fill="#fff" stroke="#333" d="M.5.5h11v9H.5z"/><path fill="#1aa7a0" d="M1 1h10v2H1z"/><path fill="#ffe14d" d="M1 3h5v6H1z"/><path stroke="#777" d="M6 3v6M1 6h10"/></svg><span>Frame.std - RAM Connection Input</span>${this.winButtons(true)}</div>
              <ram-input></ram-input>
            </section>
          </div>
        </div>
      </div>`;
  }
}
